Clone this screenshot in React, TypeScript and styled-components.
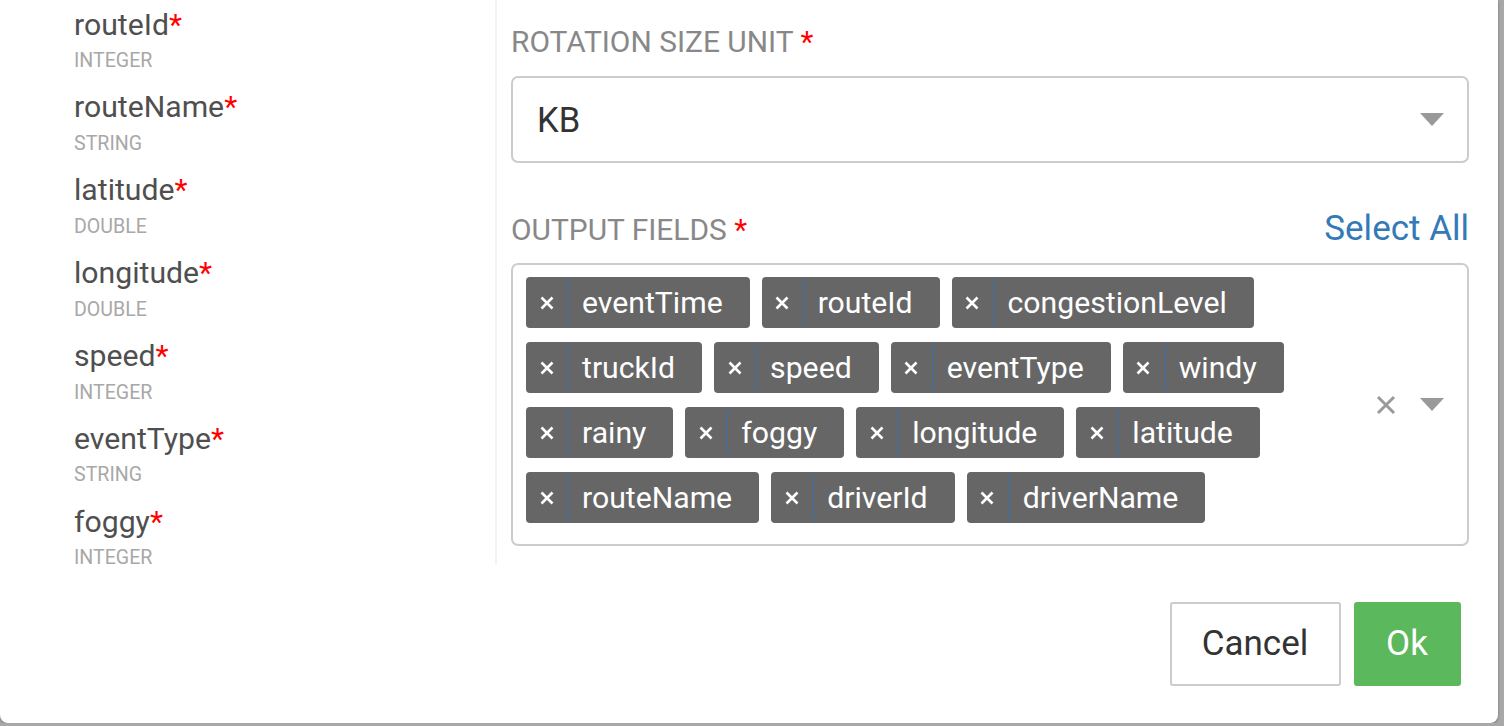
import React from 'react';
import styled, { createGlobalStyle } from 'styled-components';

const GlobalStyle = createGlobalStyle`
  html, body { margin: 0; padding: 0; }
  body {
    background: #a8a8a8;
    font-family: Roboto, "Liberation Sans", sans-serif;
    overflow: hidden;
  }
  * { box-sizing: border-box; }
`;

const Modal = styled.div`
  width: 1498px;
  height: 723px;
  background: #fff;
  border-radius: 0 0 8px 8px;
  box-shadow: 0 1px 3px rgba(0, 0, 0, 0.3);
  display: flex;
  flex-direction: column;
  overflow: hidden;
`;

const Body = styled.div`
  display: flex;
  height: 564px;
`;

const FieldList = styled.div`
  width: 497px;
  padding: 6.5px 0 0 74px;
  border-right: 2px solid #f3f3f3;
`;

const FieldItem = styled.div`
  margin-bottom: 16.4px;
`;

const FieldName = styled.div`
  font-size: 30.2px;
  line-height: 36px;
  color: #4f4f4f;
`;

const Req = styled.span`
  color: #f00;
`;

const FieldType = styled.div`
  margin-top: 6.5px;
  font-size: 19.6px;
  line-height: 24px;
  color: #a8a8a8;
`;

const FormPanel = styled.div`
  flex: 1;
  padding: 23.5px 29px 0 14px;
  display: flex;
  flex-direction: column;
`;

const FieldGroup = styled.div`
  margin-bottom: 47.5px;
`;

const LabelRow = styled.div`
  display: flex;
  justify-content: space-between;
  align-items: baseline;
  height: 35px;
  margin-bottom: 17.5px;
`;

const Label = styled.div`
  font-size: 29.9px;
  line-height: 35px;
  color: #888;
  text-transform: uppercase;
`;

const SelectAll = styled.a`
  font-size: 35px;
  line-height: 35px;
  color: #337ab7;
  text-decoration: none;
  cursor: pointer;
`;

const SelectBox = styled.div`
  height: 87px;
  border: 2px solid #ccc;
  border-radius: 7px;
  display: flex;
  align-items: center;
  padding: 0 23px 0 24px;
`;

const Value = styled.div`
  flex: 1;
  font-size: 34.5px;
  color: #333;
`;

const Caret = styled.span`
  width: 0;
  height: 0;
  border-left: 12.5px solid transparent;
  border-right: 12.5px solid transparent;
  border-top: 13px solid #999;
`;

const MultiBox = styled.div`
  height: 283px;
  border: 2px solid #ccc;
  border-radius: 7px;
  display: flex;
  align-items: center;
  padding-right: 23px;
`;

const TagArea = styled.div`
  flex: 1;
  align-self: stretch;
  display: flex;
  flex-wrap: wrap;
  align-content: flex-start;
  gap: 14px 12px;
  padding: 12px 0 20px 13px;
`;

const Tag = styled.div`
  display: flex;
  height: 51px;
  background: #666;
  border-radius: 4px;
  color: #fff;
`;

const TagRemove = styled.span`
  width: 43px;
  display: flex;
  align-items: center;
  justify-content: center;
  border-right: 2px solid #4f6b88;
`;

const RemoveIcon = styled.svg`
  width: 14px;
  height: 14px;
  display: block;
`;

const TagLabel = styled.span`
  font-size: 30.2px;
  line-height: 51px;
  padding: 0 27px 0 13px;
`;

const Indicators = styled.div`
  display: flex;
  align-items: center;
  gap: 24px;
`;

const ClearIcon = styled.svg`
  width: 20px;
  height: 20px;
  display: block;
`;

const Footer = styled.div`
  display: flex;
  justify-content: flex-end;
  gap: 13px;
  padding: 37.5px 37.5px 0 0;
`;

const Button = styled.button<{ $primary?: boolean }>`
  height: 84px;
  width: ${(p) => (p.$primary ? '107px' : '171px')};
  border-radius: 3px;
  border: 2px solid ${(p) => (p.$primary ? '#5cb85c' : '#ccc')};
  background: ${(p) => (p.$primary ? '#5cb85c' : '#fff')};
  color: ${(p) => (p.$primary ? '#fff' : '#333')};
  font-family: Roboto, "Liberation Sans", sans-serif;
  font-size: 35px;
  padding: 0;
  cursor: pointer;
`;

const fields: [string, string][] = [
  ['routeId', 'INTEGER'],
  ['routeName', 'STRING'],
  ['latitude', 'DOUBLE'],
  ['longitude', 'DOUBLE'],
  ['speed', 'INTEGER'],
  ['eventType', 'STRING'],
  ['foggy', 'INTEGER'],
];

const tags = [
  'eventTime', 'routeId', 'congestionLevel',
  'truckId', 'speed', 'eventType', 'windy',
  'rainy', 'foggy', 'longitude', 'latitude',
  'routeName', 'driverId', 'driverName',
];

export default function App() {
  return (
    <>
      <GlobalStyle />
      <Modal>
        <Body>
          <FieldList>
            {fields.map(([name, type]) => (
              <FieldItem key={name}>
                <FieldName>
                  {name}
                  <Req>*</Req>
                </FieldName>
                <FieldType>{type}</FieldType>
              </FieldItem>
            ))}
          </FieldList>
          <FormPanel>
            <FieldGroup>
              <LabelRow>
                <Label>
                  Rotation Size Unit <Req>*</Req>
                </Label>
              </LabelRow>
              <SelectBox>
                <Value>KB</Value>
                <Caret />
              </SelectBox>
            </FieldGroup>
            <FieldGroup>
              <LabelRow>
                <Label>
                  Output Fields <Req>*</Req>
                </Label>
                <SelectAll>Select All</SelectAll>
              </LabelRow>
              <MultiBox>
                <TagArea>
                  {tags.map((t) => (
                    <Tag key={t}>
                      <TagRemove>
                        <RemoveIcon viewBox="0 0 14 14">
                          <path d="M1.5 1.5 L12.5 12.5 M12.5 1.5 L1.5 12.5" stroke="#fff" strokeWidth="2.6" fill="none" />
                        </RemoveIcon>
                      </TagRemove>
                      <TagLabel>{t}</TagLabel>
                    </Tag>
                  ))}
                </TagArea>
                <Indicators>
                  <ClearIcon viewBox="0 0 20 20">
                    <path d="M2 2 L18 18 M18 2 L2 18" stroke="#999" strokeWidth="3" fill="none" />
                  </ClearIcon>
                  <Caret />
                </Indicators>
              </MultiBox>
            </FieldGroup>
          </FormPanel>
        </Body>
        <Footer>
          <Button>Cancel</Button>
          <Button $primary>Ok</Button>
        </Footer>
      </Modal>
    </>
  );
}
